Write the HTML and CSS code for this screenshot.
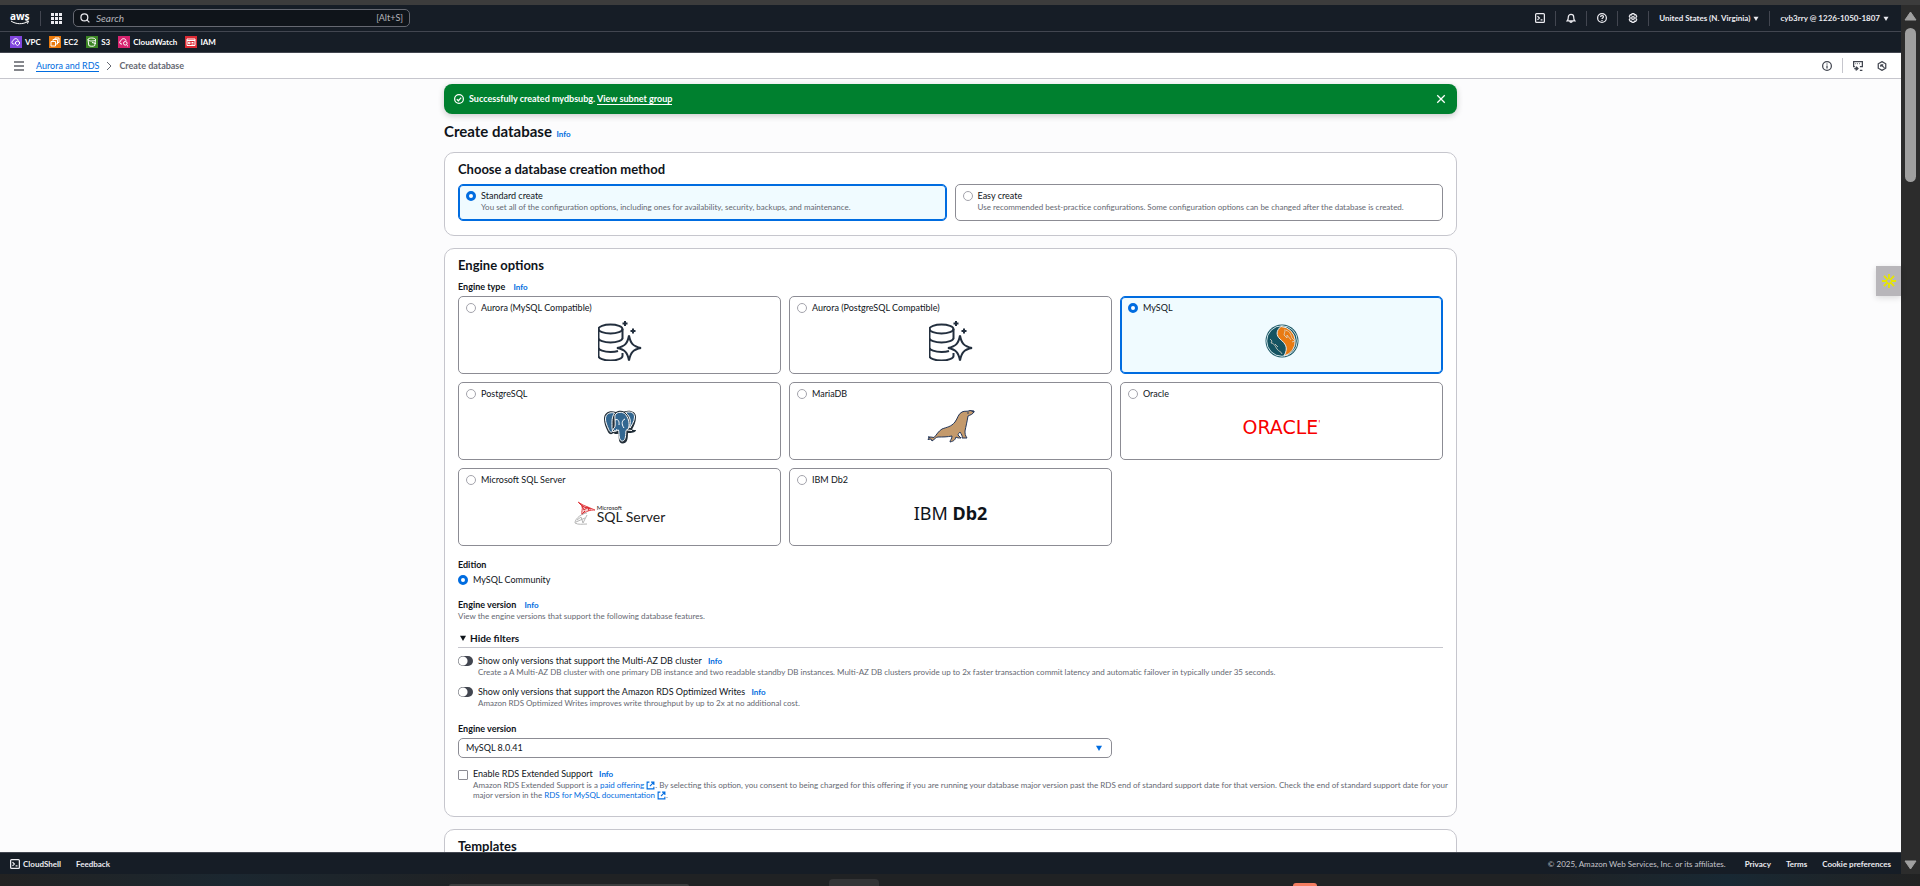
FILE: index.html
```html
<!DOCTYPE html>
<html lang="en">
<head>
<meta charset="utf-8">
<title>Create database</title>
<link rel="stylesheet" href="styles.css">
</head>
<body>
<svg class="defs" aria-hidden="true">
  <symbol id="shell" viewBox="0 0 16 16"><rect x="1" y="1" width="14" height="14" rx="1.5"/><path d="M4 5l3 3-3 3M9 11h3"/></symbol>
  <symbol id="caret" viewBox="0 0 8 8"><path d="M0 1h8L4 8z"/></symbol>
  <symbol id="external" viewBox="0 0 16 16"><path d="M6 2H2v12h12v-4M9 2h5v5M14 2L7 9"/></symbol>
  <symbol id="aurora" viewBox="0 0 44 40">
    <ellipse cx="12.500" cy="8" rx="12" ry="4.500"/>
    <path d="M.5 8v27c0 2.500 5.400 4.500 12 4.500s12-2 12-4.500v-3M24.500 8v10M.5 17c0 2.500 5.400 4.500 12 4.500s12-2 12-4.500M.5 26.500c0 2.500 5.400 4.500 12 4.500 3 0 5.500-.3 7.500-1"/>
    <path class="spark" d="M31 14.500c1.500 8 4 11 12 12.500-8 1.500-10.500 4.500-12 12.500-1.500-8-4-11-12-12.500 8-1.500 10.500-4.500 12-12.500z"/>
    <path d="M27 0v5M24.500 2.500h5M35 7.500v5M32.500 10h5"/>
  </symbol>
</svg>
<div class="window-edge"></div>
<div class="window">
  <div class="page">
    <header>
      <nav class="topnav">
        <a class="aws" href="#" aria-label="AWS home"><span>aws</span>
          <svg viewBox="0 0 20 5"><path d="M1 1c5 3.500 12 3.500 17 .5M15.500.7l3 .3-1 2.700"/></svg></a>
        <i class="rule"></i>
        <button class="apps" aria-label="Services"><svg viewBox="0 0 11 11"><path d="M0 0h3v3H0zM4 0h3v3H4zM8 0h3v3H8zM0 4h3v3H0zM4 4h3v3H4zM8 4h3v3H8zM0 8h3v3H0zM4 8h3v3H4zM8 8h3v3H8z"/></svg></button>
        <label class="search">
          <svg viewBox="0 0 16 16"><circle cx="7" cy="7" r="5.500"/><path d="M11 11l4 4"/></svg>
          <input type="text" placeholder="Search" aria-label="Search"><span>[Alt+S]</span>
        </label>
        <div class="tools">
          <button aria-label="CloudShell"><svg class="line"><use href="#shell"/></svg></button><i class="rule"></i>
          <button aria-label="Notifications"><svg class="line" viewBox="0 0 16 16"><path d="M2 12.500c1.500-1.500 1.700-3 1.700-6a4.300 4.300 0 018.600 0c0 3 .2 4.500 1.700 6zM6 13.500c.5 2 3.500 2 4 0"/></svg></button><i class="rule"></i>
          <button aria-label="Help"><svg class="line" viewBox="0 0 16 16"><circle cx="8" cy="8" r="7"/><path d="M5.700 6.300c0-3 4.600-3 4.600-.2C10.300 8 8 7.700 8 9.700M8 11v1.600"/></svg></button><i class="rule"></i>
          <button aria-label="Settings"><svg class="line" viewBox="0 0 16 16"><path d="M6.500 1h3l.7 2 2.100-.4 1.600 2.600L12.700 7v2l1.200 1.800-1.600 2.600-2.100-.4-.7 2h-3l-.7-2-2.100.4-1.600-2.600L3.300 9V7L2.100 5.200l1.600-2.600 2.100.4z"/><circle cx="8" cy="8" r="2.200"/></svg></button><i class="rule"></i>
          <button class="menu">United States (N. Virginia) <svg><use href="#caret"/></svg></button><i class="rule"></i>
          <button class="menu">cyb3rry @ 1226-1050-1807 <svg><use href="#caret"/></svg></button>
        </div>
      </nav>
      <nav class="favorites">
        <a href="#"><svg class="vpc" viewBox="0 0 12 12"><path d="M4.500 8H3.200a1.700 1.700 0 010-3.300c.5-2.700 4.800-2.700 5 .1M5.500 6l2-.8 2 .8v2l-2 1.500-2-1.500z"/></svg>VPC</a>
        <a href="#"><svg class="ec2" viewBox="0 0 12 12"><path d="M2 5.500h4.500V10H2zM4 5.500v-2h4.500V8h-2M6 3.500V2h4v4.500H8.500"/></svg>EC2</a>
        <a href="#"><svg class="s3" viewBox="0 0 12 12"><path d="M2 3.500c0-2 7.500-2 7.500 0s-7.500 2-7.500 0l.8 6c1 1 5 1 6 0l.7-6M6 6.500l4 1"/></svg>S3</a>
        <a href="#"><svg class="cw" viewBox="0 0 12 12"><path d="M4 8H3a1.700 1.700 0 010-3.300c.5-2.700 4.800-2.700 5 .1M8.700 9L10 10.300"/><circle cx="7.300" cy="7.300" r="1.800"/></svg>CloudWatch</a>
        <a href="#"><svg class="iam" viewBox="0 0 12 12"><path d="M2 3h8v6.500H2zM2 4.500h8M3.500 6.200H5v1.500H3.500zM6.500 6.500h2M6.500 8h2"/></svg>IAM</a>
      </nav>
      <div class="crumbs">
        <button aria-label="Open navigation"><svg viewBox="0 0 10 10"><path d="M0 1h10M0 5h10M0 9h10"/></svg></button>
        <a href="#">Aurora and RDS</a>
        <svg class="chevron" viewBox="0 0 6 10"><path d="M1 1l4 4-4 4"/></svg>
        <span>Create database</span>
        <div class="aids">
          <button aria-label="Information"><svg class="line" viewBox="0 0 16 16"><circle cx="8" cy="8" r="7"/><path d="M8 7v5M8 4v1.700"/></svg></button><i class="rule"></i>
          <button aria-label="Console tutorials"><svg class="line" viewBox="0 0 16 16"><path d="M3 9H1V1h14v8h-4M4 4h1M7 4h1M10 4h1M2 12h5M5 9v6M5 9l3 3-3 3M11 15h4"/></svg></button>
          <button aria-label="Assistant"><svg class="line" viewBox="0 0 16 16"><path d="M8 1l6 3.500v7L8 15l-6-3.500v-7zM6 6l6 5M6 6v3M6 6h4"/></svg></button>
        </div>
      </div>
    </header>
    <main>
      <div class="content">
        <div class="flash" role="status">
          <svg viewBox="0 0 16 16"><circle cx="8" cy="8" r="7"/><path d="M4.500 8.500l2.500 2.300 4.500-5"/></svg>
          <p>Successfully created mydbsubg. <a href="#">View subnet group</a></p>
          <button aria-label="Dismiss"><svg viewBox="0 0 16 16"><path d="M2 2l12 12M14 2L2 14"/></svg></button>
        </div>
        <h1>Create database <a class="info" href="#">Info</a></h1>

        <section class="card method">
          <h2>Choose a database creation method</h2>
          <div class="tiles two">
            <label class="tile"><input type="radio" name="method" checked><span>Standard create<small>You set all of the configuration options, including ones for availability, security, backups, and maintenance.</small></span></label>
            <label class="tile"><input type="radio" name="method"><span>Easy create<small>Use recommended best-practice configurations. Some configuration options can be changed after the database is created.</small></span></label>
          </div>
        </section>

        <section class="card engine">
          <h2>Engine options</h2>
          <h3 class="type">Engine type <a class="info" href="#">Info</a></h3>
          <div class="tiles three">
            <label class="tile"><input type="radio" name="engine"><span>Aurora (MySQL Compatible)</span><svg class="logo aurora"><use href="#aurora"/></svg></label>
            <label class="tile"><input type="radio" name="engine"><span>Aurora (PostgreSQL Compatible)</span><svg class="logo aurora"><use href="#aurora"/></svg></label>
            <label class="tile"><input type="radio" name="engine" checked><span>MySQL</span>
              <svg class="logo round" viewBox="0 0 34 34"><circle cx="17" cy="17" r="16.500" fill="#155361"/><circle cx="17" cy="17" r="15.300" fill="none" stroke="#cfe3e8"/><path d="M16 2.500c-5 4-5 9-1 12.500 5 4.500 9 8 4 17A15 15 0 0016 2.500z" fill="#e97b13" stroke="#e8eef0"/><path d="M5 15l2 2-1 2c3 0 4 3 6 6s4 2 5 5M10 20l3 3M19 6c5 0 7 4 8 8l3 3-3 1M20 7l-1 4 3 3v-3l4 5" fill="none" stroke="#dcd6c8" stroke-width=".8"/></svg></label>
            <label class="tile"><input type="radio" name="engine"><span>PostgreSQL</span>
              <svg class="logo round" viewBox="0 0 34 34"><path d="M1 9c0-7 6-9 12-7 2-1.500 6-1.500 8-.5 6-2 12 0 12 5.500 0 5-2 9-4 12.500 1 .8 3 .2 4 .5 0 2-4 3.500-8 3-.3 4 .3 10-5 10.500-5 .2-4-6-4.500-10-2 1-4 .5-5-.5-2 2-4.500 1.500-6-2C2.500 17 1 13 1 9z" fill="#222e38"/><path d="M2.500 9c0-5.500 4.500-7 9-6-3 4-2.500 9-2.500 13-.3 2 .5 3 .5 5.500-1.500 1.500-3 0-3.800-2C4 15.500 2.500 12.500 2.500 9zM22.500 2.500c5-1.500 9 0 9 4.500S28 16 27 18c-1-2 .5-3 .3-6.500C27.200 8 25.500 5 22.500 2.500zM12 5c2-3.500 8-3.500 10.500-.5 4 5 4 10 3 14l-2.500 2c-.5 4 0 10-3.500 10.500-4 .3-3-7-4-11-3 2-5.500.5-5-1.500 3-1 1-9 1.500-13.500z" fill="#336791" stroke="#fff" stroke-width="1"/><path d="M12 10c3-1.500 4.500 1 4 5M21 18c-3-4-2-8 1-9M14 19c-.5 2-2 3-4 2.500M24 20l5 .5" fill="none" stroke="#fff"/></svg></label>
            <label class="tile"><input type="radio" name="engine"><span>MariaDB</span>
              <svg class="logo seal" viewBox="0 0 48 34"><path d="M1 27c2 0 4 0 6 .5 3-3 4-6 8-8.500 5-2 9-2 13-7 3-4 3-8 7-10 3-1.500 5 0 8-1.500l4 .5c0 3-4 4-6 5-1 6-2 10-3 15 0 3 0 4 2 7h-5c1-2-1-4-2-6-1 1-2 2-2 3l3 3c-2 0-4 0-5-1-1 3-2 4-6 5 0-2 2-3 2-6-5 1-9 1-14 1-2 0-3 2-6 4l-1-2-3 .5c0-1 1-1.500 2-2z" fill="#c49a6c" stroke="#24375a" stroke-width="1"/><circle cx="41" cy="3" r=".8" fill="#24375a"/><path d="M44 1h3.500l-.5 2z" fill="#24375a"/></svg></label>
            <label class="tile"><input type="radio" name="engine"><span>Oracle</span><b class="logo oracle">ORACLE<sup>'</sup></b></label>
            <label class="tile"><input type="radio" name="engine"><span>Microsoft SQL Server</span>
              <b class="logo sqlserver"><svg viewBox="0 0 22 24"><path d="M4 1l5 3 12 5c-5 0-9 1-13 5-1-4 1-5 0-9z" fill="#f5c9ca" stroke="#e64b4f"/><path d="M5 2l5 4 7 2M8 5l2 4 4-3 1 4M8 13l3-3" fill="none" stroke="#d9282e"/><path d="M13 12c-4 0-12 5-12 10 3 2 8 1 12 1M3 19l4-3 2 6 4-8M2 21l9-4" fill="none" stroke="#b5b5b5"/></svg><span><small>Microsoft</small>SQL Server</span></b></label>
            <label class="tile"><input type="radio" name="engine"><span>IBM Db2</span><span class="logo ibm">IBM <b>Db2</b></span></label>
          </div>

          <h3 class="edition">Edition</h3>
          <label class="choice"><input type="radio" name="edition" checked>MySQL Community</label>

          <h3 class="version">Engine version <a class="info" href="#">Info</a></h3>
          <small>View the engine versions that support the following database features.</small>

          <button class="filters"><svg><use href="#caret"/></svg>Hide filters</button>
          <div class="toggle"><input type="checkbox" role="switch" id="maz"><div><label for="maz">Show only versions that support the Multi-AZ DB cluster</label> <a class="info" href="#">Info</a><small>Create a A Multi-AZ DB cluster with one primary DB instance and two readable standby DB instances. Multi-AZ DB clusters provide up to 2x faster transaction commit latency and automatic failover in typically under 35 seconds.</small></div></div>
          <div class="toggle"><input type="checkbox" role="switch" id="ow"><div><label for="ow">Show only versions that support the Amazon RDS Optimized Writes</label> <a class="info" href="#">Info</a><small>Amazon RDS Optimized Writes improves write throughput by up to 2x at no additional cost.</small></div></div>

          <label class="field" for="ver">Engine version</label>
          <div class="select"><select id="ver"><option>MySQL 8.0.41</option></select><svg><use href="#caret"/></svg></div>

          <div class="support"><input type="checkbox" id="ext"><div><label for="ext">Enable RDS Extended Support</label> <a class="info" href="#">Info</a><small>Amazon RDS Extended Support is a <a href="#">paid offering <svg><use href="#external"/></svg></a>. By selecting this option, you consent to being charged for this offering if you are running your database major version past the RDS end of standard support date for that version. Check the end of standard support date for your<br>major version in the <a href="#">RDS for MySQL documentation <svg><use href="#external"/></svg></a>.</small></div></div>
        </section>

        <section class="card"><h2>Templates</h2></section>
      </div>
    </main>
    <footer>
      <a href="#"><svg class="line"><use href="#shell"/></svg>CloudShell</a>
      <a href="#">Feedback</a>
      <span>© 2025, Amazon Web Services, Inc. or its affiliates.</span>
      <a href="#">Privacy</a><a href="#">Terms</a><a href="#">Cookie preferences</a>
    </footer>
    <button class="widget" aria-label="Open side panel"><svg viewBox="0 0 18 18"><path d="M9 1v6M9 11v6M1 9h6M11 9h6M3.300 3.300l4.300 4.300M10.400 10.400l4.300 4.300M14.700 3.300l-4.300 4.300M7.600 10.400l-4.300 4.300"/></svg></button>
  </div>
  <div class="scrollbar"><svg viewBox="0 0 13 10"><path d="M6.500 1L12 9H1z"/></svg><i></i><svg viewBox="0 0 13 10"><path d="M6.500 9L12 1H1z"/></svg></div>
</div>
<div class="taskbar"><i class="box"></i><i class="app"></i><i class="dot"></i></div>
</body>
</html>
```
FILE: styles.css
```css
* { box-sizing: border-box; }
body {
  margin: 0;
  height: 100vh;
  overflow: hidden;
  display: flex;
  flex-direction: column;
  font: 9px/12px Lato, "Open Sans", sans-serif;
  color: #0f141a;
  background: #202224;
}
button, input, select { font: inherit; color: inherit; margin: 0; }
button { background: none; border: 0; padding: 0; display: flex; align-items: center; }
a { color: #006ce0; text-decoration: none; }
h1, h2, h3, p { margin: 0; }
svg { flex: none; fill: none; stroke: currentColor; }
small { display: block; font-size: 8px; line-height: 10px; color: #656871; font-weight: 400; }
.defs { display: none; }
.line { width: 10px; height: 10px; stroke-width: 2; }
.rule { width: 1px; height: 15px; background: #424650; }

.window-edge { height: 5px; background: #3c3c3c; }
.window { flex: 1; min-height: 0; display: flex; }
.page { flex: 1; min-width: 0; display: flex; flex-direction: column; position: relative; background: #fcfcfd; }
.scrollbar { width: 19px; background: #2c2c2c; display: flex; flex-direction: column; align-items: center; padding: 6px 0 4px; gap: 7px; }
.scrollbar svg { width: 13px; height: 10px; fill: #a0a0a0; stroke: #a0a0a0; stroke-linejoin: round; }
.scrollbar i { width: 11px; height: 154px; border-radius: 6px; background: #9f9f9f; margin-bottom: auto; }

.topnav { height: 27px; background: #161d26; color: #ebebf0; border-bottom: 1px solid #424650; display: flex; align-items: center; padding: 0 12px 0 10px; }
.aws { color: #fff; display: flex; flex-direction: column; width: 20px; margin-right: 10px; }
.aws span { font: 700 10px/8px "Open Sans", sans-serif; }
.aws svg { width: 20px; height: 5px; }
.apps { margin: 0 11px 0 10px; }
.apps svg { width: 11px; height: 11px; fill: #ebebf0; stroke: none; }
.search { width: 337px; height: 18px; border: 1px solid #656871; border-radius: 5px; background: #0f141a; display: flex; align-items: center; gap: 6px; padding: 0 6px; }
.search svg { width: 10px; height: 10px; stroke-width: 2; }
.search input { flex: 1; min-width: 0; border: 0; background: none; padding: 0; font-size: 10px; outline: 0; }
.search input::placeholder { color: #b4b4bb; font-style: italic; opacity: 1; }
.search span { font-size: 9px; color: #b4b4bb; }
.tools { margin-left: auto; display: flex; align-items: center; gap: 10px; }
.menu { font-size: 8px; font-weight: 700; gap: 3px; }
.menu svg { width: 6px; height: 5px; fill: currentColor; stroke: none; }

.favorites { height: 21px; background: #161d26; border-bottom: 1px solid #424650; display: flex; align-items: center; gap: 8px; padding: 0 10px; font-size: 8px; }
.favorites a { color: #fff; display: flex; align-items: center; gap: 3px; font-weight: 700; }
.favorites svg { width: 12px; height: 12px; stroke-width: 1; color: #fff; }
.vpc { background: #8046dd; }
.ec2 { background: #ea7a0c; }
.s3 { background: #3c8624; }
.cw { background: #d7236f; }
.iam { background: #db2b34; }

.crumbs { height: 26px; background: #fff; border-bottom: 1px solid #c6c6cd; display: flex; align-items: center; padding: 0 14px; color: #656871; }
.crumbs > span { font-weight: 700; }
.crumbs > button { margin-right: 12px; color: #85878c; }
.crumbs > button svg { width: 10px; height: 10px; stroke-width: 2; }
.crumbs > a { border-bottom: 1px solid #006ce0; line-height: 11px; }
.chevron { width: 6px; height: 10px; stroke-width: 1; margin: 0 7px; }
.aids { margin-left: auto; display: flex; align-items: center; gap: 14px; color: #424650; }
.aids .rule { background: #c6c6cd; margin-right: -4px; margin-left: -4px; }

main { flex: 1; min-height: 0; overflow: hidden; padding-top: 5px; }
.content { max-width: 1013px; margin: 0 auto; }
.flash { height: 30px; background: #00802f; color: #fff; border-radius: 8px; display: flex; align-items: center; gap: 5px; padding: 0 11px 0 10px; box-shadow: 0 2px 6px #0003; font-weight: 700; }
.flash svg { width: 10px; height: 10px; stroke-width: 2; display: block; }
.flash p { flex: 1; }
.flash a { color: #fff; border-bottom: 1px solid #fff; }
h1 { font-size: 15px; line-height: 16px; margin: 9px 0 12px; }
h2 { font-size: 13px; line-height: 14px; }
h3, .field { font-size: 9px; line-height: 12px; font-weight: 700; }
.type { margin: 9px 0 3px; }
.info { font-size: 8px; font-weight: 700; margin-left: 4px; }
h1 { margin-bottom: 10px; }
h1 .info { margin-left: 1px; }
h3 .info { margin-left: 6px; }
.card { background: #fff; border: 1px solid #c6c6cd; border-radius: 10px; padding: 9px 13px 14px; margin-bottom: 12px; }
.engine { padding-bottom: 16px; }
.tiles { display: grid; gap: 8px; }
.two { grid-template-columns: 1fr 1fr; margin-top: 8px; }
.three { grid-template-columns: 1fr 1fr 1fr; }
.three .tile { height: 78px; }
.tile { border: 1px solid #8c8c94; border-radius: 5px; padding: 5px 7px; display: grid; grid-template-columns: 10px 1fr; grid-template-rows: 12px 1fr; column-gap: 5px; align-items: center; }
.two .tile { grid-template-rows: auto; align-items: start; }
.tile:has(:checked) { border-color: #006ce0; background: #f0fbff; box-shadow: inset 0 0 0 1px #006ce0; }
.method .tile { min-height: 37px; }
input[type="radio"] { appearance: none; width: 10px; height: 10px; border: 1px solid #a4a4ac; border-radius: 50%; background: #fff; }
input[type="radio"]:checked { border: 3px solid #006ce0; }
.two input { margin-top: 1px; }
.logo { grid-column: 1 / 3; justify-self: center; }
.aurora { width: 44px; height: 40px; color: #232f3e; stroke-width: 2; }
.round { width: 34px; height: 34px; stroke: none; }
.seal { width: 48px; height: 34px; stroke: none; }
.oracle { font: 400 19px/20px "DejaVu Sans", sans-serif; color: #f80000; }
.oracle sup { font-size: 8px; line-height: 1px; }
.sqlserver { display: flex; align-items: center; gap: 1px; font: 400 14px/12px Lato, sans-serif; color: #222; }
.sqlserver svg { width: 22px; height: 24px; }
.sqlserver small { font-size: 6px; line-height: 7px; color: #222; }
.ibm { font: 18px/20px "Noto Sans", sans-serif; }

.edition { margin-top: 13px; }
.choice { display: flex; align-items: center; gap: 5px; margin-top: 3px; }
.version { margin-top: 13px; }
.filters { width: 100%; font-size: 10px; font-weight: 700; gap: 4px; padding: 11px 2px 3px; border-bottom: 1px solid #c6c6cd; }
.filters svg { width: 6px; height: 6px; fill: currentColor; stroke: none; }
.toggle { display: flex; gap: 5px; margin-top: 7px; }
.toggle + .toggle { margin-top: 9px; }
.toggle input { appearance: none; width: 15px; height: 10px; border-radius: 5px; background: radial-gradient(circle at 5px 5px, #fff 4px, #424650 5px); margin-top: 1px; }
.field { display: block; margin-top: 15px; }
.select { display: grid; align-items: center; width: calc((200% - 8px) / 3); margin: 3px 0 10px; }
.select > * { grid-area: 1 / 1; }
.select select { appearance: none; height: 20px; border: 1px solid #8c8c94; border-radius: 5px; background: #fff; padding: 0 7px; }
.select svg { justify-self: end; width: 6px; height: 6px; margin-right: 10px; fill: #006ce0; stroke: none; pointer-events: none; }
.support { display: flex; gap: 5px; margin-right: -11px; }
.support input { appearance: none; flex: none; width: 10px; height: 10px; border: 1px solid #8c8c94; border-radius: 1px; background: #fff; margin-top: 2px; }
.support small svg { width: 9px; height: 9px; stroke-width: 2; vertical-align: -2px; }

footer { height: 22px; border-top: 1px solid #424650; background: #161d26; color: #c6c6cd; display: flex; align-items: center; gap: 15px; padding: 0 10px; font-size: 8px; }
footer a { color: #ebebf0; display: flex; align-items: center; gap: 3px; font-weight: 700; }
footer span { margin-left: auto; margin-right: 4px; }
.widget { position: absolute; right: 0; top: 261px; width: 25px; height: 30px; background: #b8b6ba; box-shadow: 0 2px 6px #0002; justify-content: center; color: #e6e600; }
.widget svg { width: 16px; height: 16px; stroke-width: 2; }

.taskbar { height: 12px; background: linear-gradient(90deg, #222, #1b2730 12%, #202224 25% 80%, #182833 90%, #222); display: grid; grid-template-columns: 449fr 240fr 140fr 50fr 414fr 24fr 603fr; align-items: end; overflow: hidden; }
.taskbar .box { grid-column: 2; height: 2px; background: #3c3d3e; border-radius: 2px 2px 0 0; }
.taskbar .app { grid-column: 4; height: 7px; background: #333436; border-radius: 4px 4px 0 0; }
.taskbar .dot { grid-column: 6; height: 3px; background: #f47c60; border-radius: 9px 9px 0 0; }
```
